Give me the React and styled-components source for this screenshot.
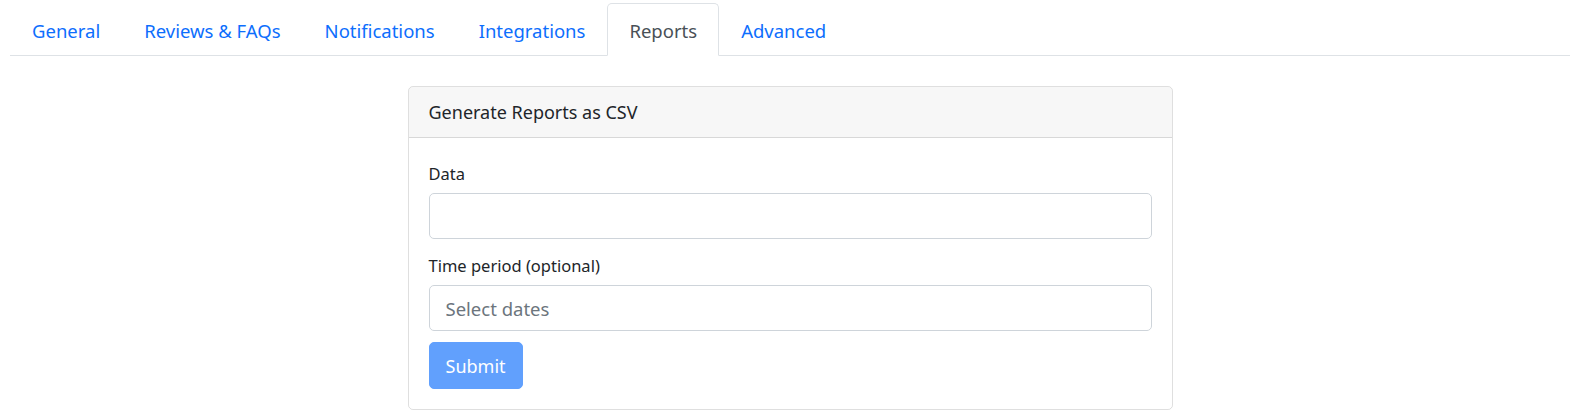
import React, { useState } from "react";
import styled, { createGlobalStyle } from "styled-components";

const GlobalStyle = createGlobalStyle`
  body {
    margin: 0;
    background: #fff;
    color: #212529;
    font-family: "Noto Sans", "Open Sans", sans-serif;
  }
  * {
    box-sizing: border-box;
  }
`;

const Page = styled.div`
  padding: 3px 5px 0 10px;
`;

const TabBar = styled.ul`
  display: flex;
  list-style: none;
  margin: 0;
  padding: 0;
  border-bottom: 1px solid #dee2e6;
`;

const Tab = styled.li`
  margin-bottom: -1px;
  padding: 13px 21px 11px;
  font-size: 18.5px;
  line-height: 27px;
  cursor: pointer;
  color: ${(p) => (p.active ? "#495057" : "#0d6efd")};
  background: ${(p) => (p.active ? "#fff" : "transparent")};
  border: 1px solid ${(p) => (p.active ? "#dee2e6" : "transparent")};
  border-bottom-color: ${(p) => (p.active ? "#fff" : "transparent")};
  border-radius: 5px 5px 0 0;
`;

const Content = styled.div`
  display: flex;
  justify-content: center;
  padding-top: 30px;
`;

const Card = styled.div`
  width: 765px;
  border: 1px solid rgba(0, 0, 0, 0.125);
  border-radius: 5px;
  overflow: hidden;
`;

const CardHeader = styled.div`
  padding: 12px 20px;
  font-size: 18px;
  line-height: 26px;
  background: rgba(0, 0, 0, 0.03);
  border-bottom: 1px solid rgba(0, 0, 0, 0.125);
`;

const CardBody = styled.form`
  padding: 23px 20px 20px;
`;

const FormGroup = styled.div`
  margin-bottom: ${(p) => (p.last ? "11px" : "14px")};
`;

const Label = styled.label`
  display: block;
  font-size: 16.5px;
  line-height: 25px;
  margin-bottom: 7px;
`;

const Input = styled.input`
  display: block;
  width: 100%;
  height: 46px;
  padding: 9px 16px;
  font-family: inherit;
  font-size: 18.5px;
  color: #212529;
  border: 1px solid #ced4da;
  border-radius: 5px;
  outline: none;

  &::placeholder {
    color: #6c757d;
  }
`;

const Button = styled.button`
  display: block;
  height: 47px;
  padding: 0 16px;
  font-family: inherit;
  font-size: 18px;
  color: #fff;
  background: #0d6efd;
  opacity: 0.65;
  border: 1px solid #0d6efd;
  border-radius: 5px;
  cursor: default;
`;

const tabs = ["General", "Reviews & FAQs", "Notifications", "Integrations", "Reports", "Advanced"];

export default function App() {
  const [active, setActive] = useState("Reports");

  return (
    <Page>
      <GlobalStyle />
      <TabBar>
        {tabs.map((t) => (
          <Tab key={t} active={t === active} onClick={() => setActive(t)}>
            {t}
          </Tab>
        ))}
      </TabBar>
      <Content>
        <Card>
          <CardHeader>Generate Reports as CSV</CardHeader>
          <CardBody onSubmit={(e) => e.preventDefault()}>
            <FormGroup>
              <Label>Data</Label>
              <Input type="text" />
            </FormGroup>
            <FormGroup last>
              <Label>Time period (optional)</Label>
              <Input type="text" placeholder="Select dates" />
            </FormGroup>
            <Button type="submit" disabled>
              Submit
            </Button>
          </CardBody>
        </Card>
      </Content>
    </Page>
  );
}
